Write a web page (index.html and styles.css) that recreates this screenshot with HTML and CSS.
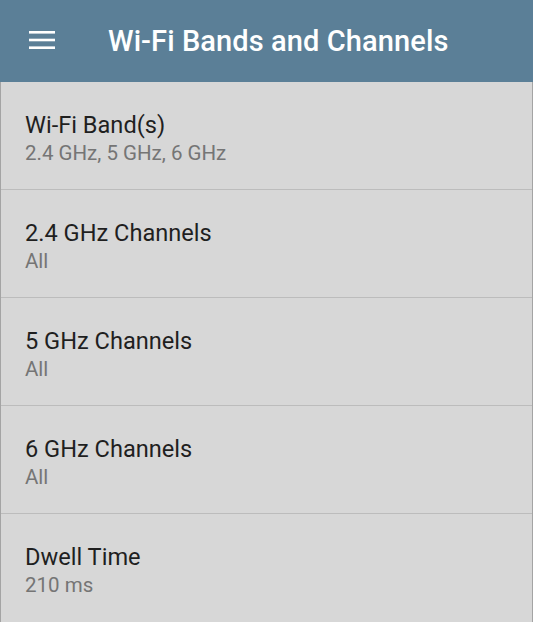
FILE: index.html
```html
<!doctype html>
<html>
<head>
<meta charset="utf-8">
<meta name="viewport" content="width=device-width,initial-scale=1.0" />
<title>Wi-Fi Bands and Channels</title>
<link rel="stylesheet" href="styles.css">
</head>
<body>
  <div id="toolbar">
    <div class="menu-btn">
      <svg width="26" height="18" viewBox="0 0 26 18">
        <rect x="0" y="0" width="26" height="2.6" fill="#fff"/>
        <rect x="0" y="7.7" width="26" height="2.6" fill="#fff"/>
        <rect x="0" y="15.4" width="26" height="2.6" fill="#fff"/>
      </svg>
    </div>
    <h1 class="title">Wi-Fi Bands and Channels</h1>
  </div>

  <div id="prefs">
    <div class="pref">
      <div class="pref-title">Wi-Fi Band(s)</div>
      <div class="pref-summary">2.4 GHz, 5 GHz, 6 GHz</div>
    </div>
    <div class="pref">
      <div class="pref-title">2.4 GHz Channels</div>
      <div class="pref-summary">All</div>
    </div>
    <div class="pref">
      <div class="pref-title">5 GHz Channels</div>
      <div class="pref-summary">All</div>
    </div>
    <div class="pref">
      <div class="pref-title">6 GHz Channels</div>
      <div class="pref-summary">All</div>
    </div>
    <div class="pref">
      <div class="pref-title">Dwell Time</div>
      <div class="pref-summary">210 ms</div>
    </div>
  </div>
</body>
</html>
```

FILE: styles.css
```css
html {
  width: 100%;
  height: 100%;
  padding: 0;
  margin: 0;
  background: #d7d7d7;
}

body {
  display: flex;
  flex-direction: column;
  width: 100%;
  height: 100%;
  padding: 0;
  margin: 0;
  overflow: hidden;
  font-family: Roboto, "Noto Sans", sans-serif;
}

#toolbar {
  display: flex;
  align-items: center;
  flex: 0 0 82px;
  height: 82px;
  background: #5b7f97;
  color: #fff;
}

.menu-btn {
  display: flex;
  width: 29px;
  padding-left: 29px;
  padding-right: 50px;
  padding-bottom: 2px;
}

.title {
  margin: 0;
  font-size: 29px;
  font-weight: 500;
  letter-spacing: 0.1px;
}

#prefs {
  display: flex;
  flex-direction: column;
  flex: 1 1 auto;
  border-left: 1px solid #a4a4a4;
  border-right: 1px solid #a4a4a4;
  background: #d7d7d7;
}

.pref {
  display: flex;
  flex-direction: column;
  justify-content: center;
  flex: 0 0 108px;
  height: 108px;
  padding-left: 24px;
  padding-top: 5px;
  border-bottom: 1px solid #bcbcbc;
  box-sizing: border-box;
}

.pref:last-child {
  border-bottom: 0;
}

.pref-title {
  font-size: 23.6px;
  color: #1f1f1f;
  line-height: 30px;
}

.pref-summary {
  font-size: 20.5px;
  color: #757575;
  line-height: 27px;
}
```
